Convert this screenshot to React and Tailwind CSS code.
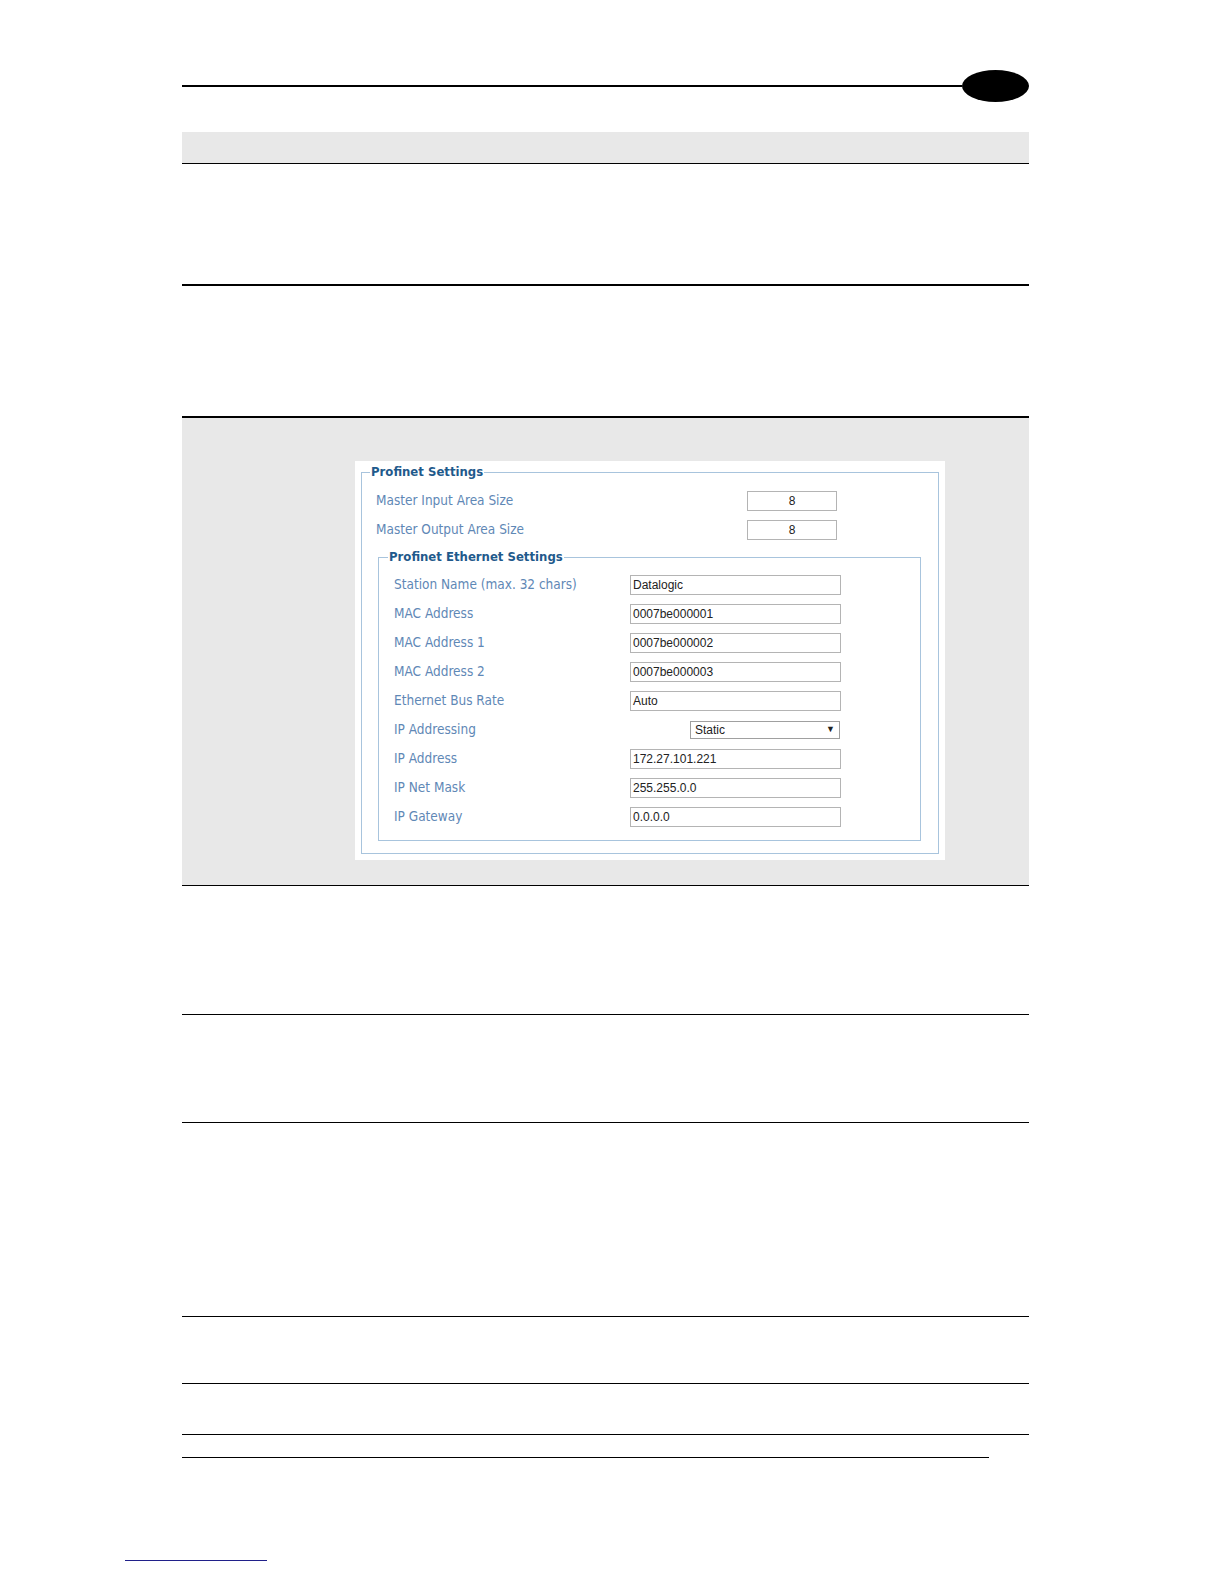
import React from "react";

const labelCls = "text-[13.5px] text-[#5f88b6] [font-family:'DejaVu_Sans_Condensed','DejaVu_Sans',sans-serif]";
const inputCls = "h-[20px] border border-[#b4b4b4] bg-white text-[12px] text-[#222] px-[2px] leading-[18px] [font-family:'Liberation_Sans',Arial,sans-serif]";

function Row({ label, children, labelW }) {
  return (
    <div className="flex items-center h-[29px]">
      <div className={labelCls} style={{ width: labelW }}>{label}</div>
      {children}
    </div>
  );
}

function Legend({ children, offset }) {
  return (
    <legend
      className="px-[1px] text-[13px] font-bold text-[#1f5a8c] leading-[16px] [font-family:'DejaVu_Sans_Condensed','DejaVu_Sans',sans-serif]"
      style={{ marginLeft: offset }}
    >
      {children}
    </legend>
  );
}

export default function App() {
  const inner = [
    ["Station Name (max. 32 chars)", "Datalogic"],
    ["MAC Address", "0007be000001"],
    ["MAC Address 1", "0007be000002"],
    ["MAC Address 2", "0007be000003"],
    ["Ethernet Bus Rate", "Auto"],
    ["IP Addressing", null],
    ["IP Address", "172.27.101.221"],
    ["IP Net Mask", "255.255.0.0"],
    ["IP Gateway", "0.0.0.0"],
  ];
  return (
    <div className="w-[1224px] h-[1584px] bg-white">
      <div className="ml-[182px] w-[847px] pt-[70px] flex flex-col">
        <div className="flex items-center h-[32px]">
          <div className="flex-1 h-[2px] bg-black" />
          <div className="w-[67px] h-[32px] rounded-[50%] bg-black" />
        </div>
        <div className="h-[30px]" />
        <div className="h-[32px] bg-[#e8e8e8] border-b border-black" />
        <div className="h-[122px] border-b-2 border-black" />
        <div className="h-[132px] border-b-2 border-black" />
        <div className="h-[468px] bg-[#e8e8e8] border-b border-black pt-[43px] pl-[173px]">
          <div className="w-[590px] h-[399px] bg-white px-[6px] pt-[3px]">
            <fieldset className="border border-[#a8c4dd] h-[390px] p-0">
              <Legend offset={8}>Profinet Settings</Legend>
              <div className="pl-[14px] pr-[17px]">
                <div className="pt-[6px]">
                  <Row label="Master Input Area Size" labelW={371}>
                    <div className={inputCls + " w-[90px] text-center"}>8</div>
                  </Row>
                  <Row label="Master Output Area Size" labelW={371}>
                    <div className={inputCls + " w-[90px] text-center"}>8</div>
                  </Row>
                </div>
                <fieldset className="mt-[5px] ml-[2px] border border-[#a8c4dd] p-0">
                  <Legend offset={9}>Profinet Ethernet Settings</Legend>
                  <div className="pl-[15px] pr-[20px] pb-[9px] pt-[5px]">
                    {inner.map(([l, v]) => (
                      <Row key={l} label={l} labelW={236}>
                        {v === null ? (
                          <div className="ml-[60px] w-[150px] h-[18px] border border-[#a0a0a0] bg-white flex items-center justify-between pl-[4px] pr-[4px] text-[12px] text-[#222] [font-family:'Liberation_Sans',Arial,sans-serif]">
                            <span>Static</span>
                            <span className="text-[9px]">▼</span>
                          </div>
                        ) : (
                          <div className={inputCls + " w-[211px]"}>{v}</div>
                        )}
                      </Row>
                    ))}
                  </div>
                </fieldset>
              </div>
            </fieldset>
          </div>
        </div>
        <div className="h-[129px] border-b border-black" />
        <div className="h-[108px] border-b border-black" />
        <div className="h-[194px] border-b border-black" />
        <div className="h-[67px] border-b border-black" />
        <div className="h-[51px] border-b border-black" />
        <div className="mt-[22px] w-[807px] h-px bg-black" />
      </div>
      <div className="mt-[102px] ml-[125px] w-[142px] h-px bg-[#20208a]" />
    </div>
  );
}
